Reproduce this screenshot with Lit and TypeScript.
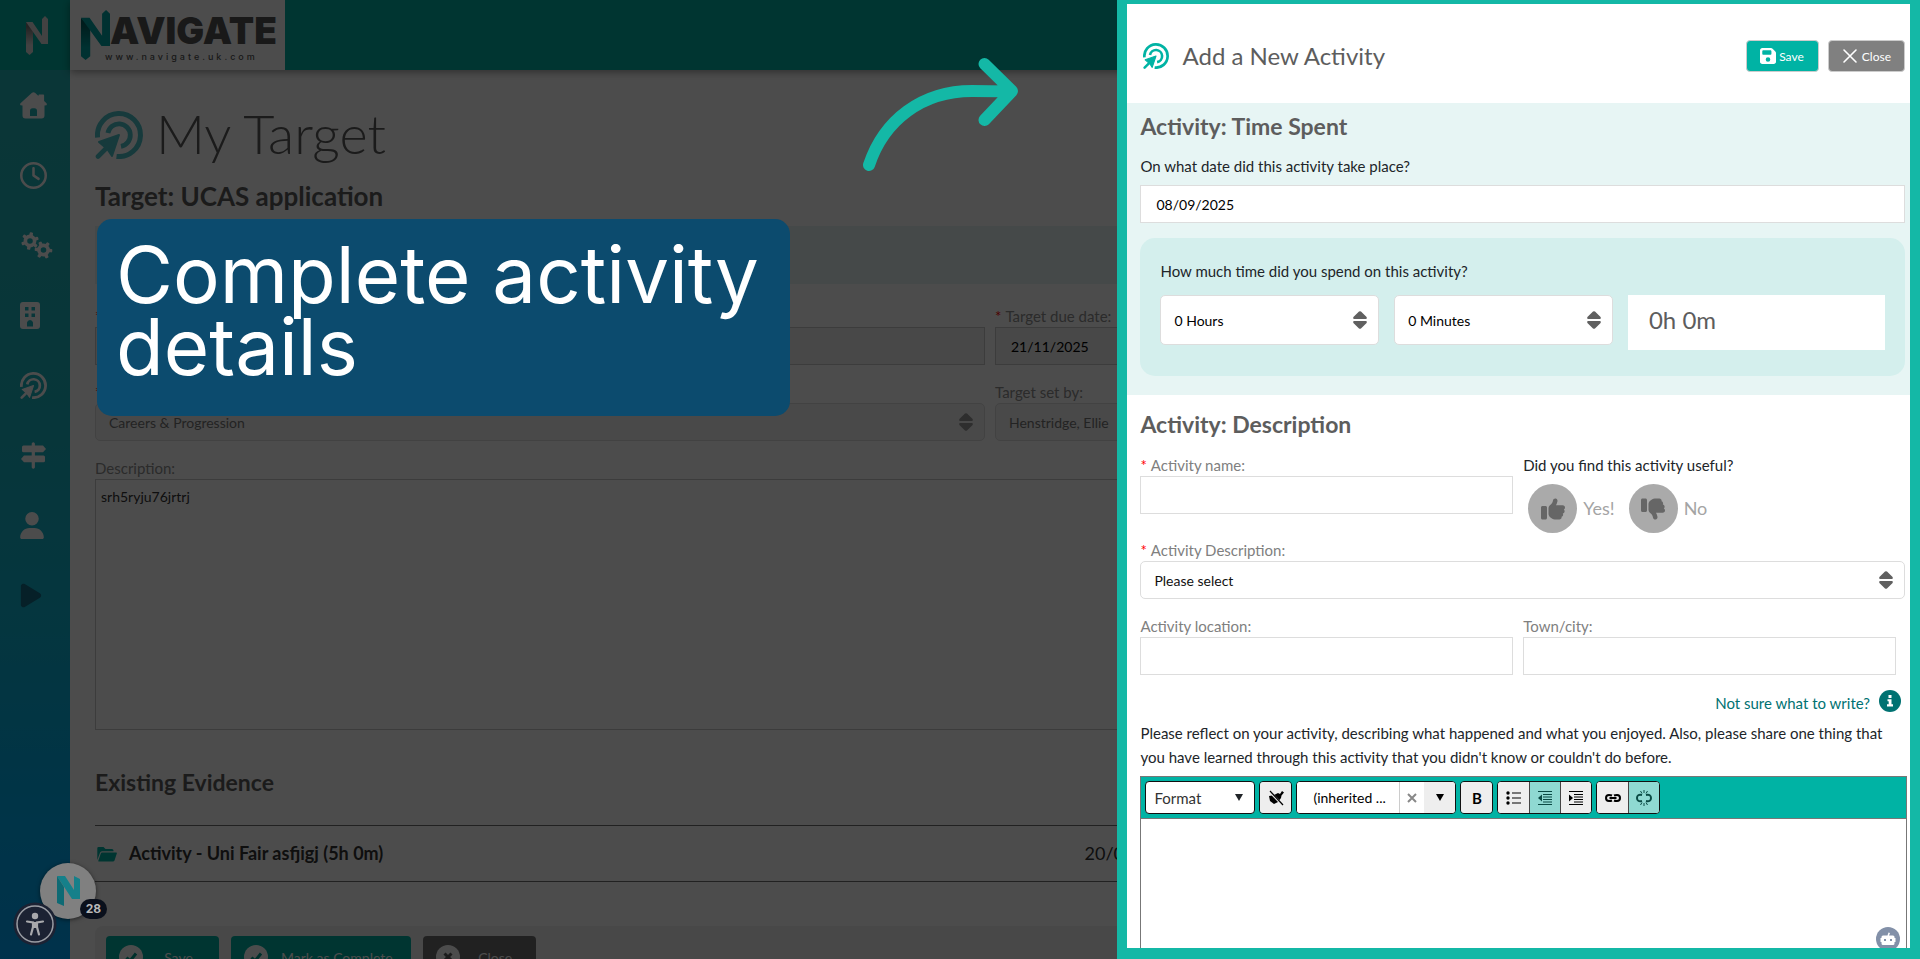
import { LitElement, html, css, svg, nothing } from "lit";
import { customElement, state } from "lit/decorators.js";

const USER = "M224 256A128 128 0 1 0 224 0a128 128 0 1 0 0 256zm-45.7 48C79.8 304 0 383.8 0 482.3C0 498.7 13.3 512 29.7 512H418.3c16.4 0 29.7-13.3 29.7-29.7C448 383.8 368.2 304 269.7 304H178.3z";
const PLAY = "M73 39c-14.8-9.1-33.4-9.4-48.5-.9S0 62.6 0 80V432c0 17.4 9.4 33.4 24.5 41.9s33.7 8.1 48.5-.9L361 297c14.3-8.7 23-24.2 23-41s-8.7-32.2-23-41L73 39z";
const CLOCK = "M464 256A208 208 0 1 1 48 256a208 208 0 1 1 416 0zM0 256a256 256 0 1 0 512 0A256 256 0 1 0 0 256zM232 120V256c0 8 4 15.5 10.7 20l96 64c11 7.4 25.9 4.4 33.3-6.7s4.4-25.9-6.7-33.3L280 243.2V120c0-13.3-10.7-24-24-24s-24 10.7-24 24z";
const THUMB = "M313.4 32.9c26 5.2 42.9 30.5 37.7 56.5l-2.3 11.4c-5.3 26.7-15.1 52.1-28.8 75.2H464c26.5 0 48 21.5 48 48c0 18.5-10.5 34.6-25.9 42.6C497 275.4 504 288.9 504 304c0 23.4-16.8 42.9-38.9 47.1c4.4 7.3 6.9 15.8 6.9 24.9c0 21.3-13.9 39.4-33.1 45.6c.7 3.3 1.1 6.8 1.1 10.4c0 26.5-21.5 48-48 48H294.5c-19 0-37.5-5.6-53.3-16.1l-38.5-25.7C176 420.4 160 390.4 160 358.3V320 272 247.1c0-29.2 13.3-56.7 36-75l7.4-5.9c26.5-21.2 44.6-51 51.2-84.2l2.3-11.4c5.2-26 30.5-42.9 56.5-37.7zM32 192H96c17.7 0 32 14.3 32 32V448c0 17.7-14.3 32-32 32H32c-17.7 0-32-14.3-32-32V224c0-17.7 14.3-32 32-32z";
const FLOPPY = "M64 32C28.7 32 0 60.7 0 96V416c0 35.3 28.7 64 64 64H384c35.3 0 64-28.7 64-64V173.3c0-17-6.7-33.3-18.7-45.3L352 50.7C340 38.7 323.7 32 306.7 32H64zm0 96c0-17.7 14.3-32 32-32H288c17.7 0 32 14.3 32 32v64c0 17.7-14.3 32-32 32H96c-17.7 0-32-14.3-32-32V128zM224 288a64 64 0 1 1 0 128 64 64 0 1 1 0-128z";

const targetIcon = (cls: string) => html`<svg class=${cls} viewBox="0 0 48 48" aria-hidden="true">
  <path d="M2.6 26.5A21.5 21.5 0 1 1 21.5 45.4" fill="none" stroke="currentColor" stroke-width="5" />
  <path d="M12.9 22A11.3 11.3 0 1 1 26 35.3" fill="none" stroke="currentColor" stroke-width="4.8" />
  <path d="M24 24L17 45L12 37.500L11 37L4 31Z" fill="currentColor" stroke="currentColor" stroke-width="2" stroke-linejoin="round" />
  <path d="M3 45.500L15 33.500" stroke="currentColor" stroke-width="4.600" stroke-linecap="round" />
</svg>`;

const teeth = (cx: number, cy: number, turn: number) => svg`
  <circle cx=${cx} cy=${cy} r="4.600" fill="none" stroke="currentColor" stroke-width="3.600" />
  ${[0, 60, 120, 180, 240, 300].map(
    (a) => svg`<rect x=${cx - 1.7} y=${cy - 8.8} width="3.400" height="4" rx="1" fill="currentColor" transform="rotate(${a + turn} ${cx} ${cy})" />`
  )}`;

const nMark = (cls: string, light: string, shade: string, id: string) => html`<svg class=${cls} viewBox="0 0 22 39" preserveAspectRatio="none" aria-hidden="true">
  <defs><linearGradient id=${id} x1="0" y1="0" x2="0" y2="1">
    <stop offset="0.15" stop-color=${shade} /><stop offset="0.7" stop-color=${light} />
  </linearGradient></defs>
  <path d="M0 6L7 13V36L3.500 39L0 36Z" fill="url(#${id})" />
  <path d="M0 6H6.500L16 20V3L19 0L22 3V28H15.500Z" fill=${light} />
</svg>`;

const sorter = html`<svg class="sorter" viewBox="0 0 14 18" aria-hidden="true">
  <path d="M6 .6Q7 -.2 8 .6L13.600 6Q14.200 7.700 13 8H1Q-.2 7.700 .4 6ZM6 17.400Q7 18.200 8 17.400L13.600 12Q14.200 10.300 13 10H1Q-.2 10.300 .4 12Z" fill="currentColor" />
</svg>`;

const menuIcons = [
  { name: "Home", width: 27, box: "0 0 27 27", art: svg`<path fill="currentColor" fill-rule="evenodd" d="M12 .8Q13.500 -.5 15 .8L18.500 4V3.200Q18.500 2.500 19.200 2.500H23.300Q24.100 2.500 24.100 3.300V9L26.500 11.200Q27.200 12.200 26.500 13.200L24.500 13.400V23.500Q24.500 26.500 21.500 26.500H5.500Q2.500 26.500 2.500 23.500V13.600L.5 13.200Q-.3 12.200 .5 11.200ZM10 24V19Q10 16.300 12.500 16.300H14.500Q17 16.300 17 19V24Z" />` },
  { name: "History", width: 27, box: "0 0 512 512", art: svg`<path fill="currentColor" d=${CLOCK} />` },
  { name: "Skills", width: 33, box: "0 0 33 27", art: svg`${teeth(10, 9, 10)}${teeth(23.500, 18, 35)}` },
  { name: "Organisation", width: 20, box: "0 0 20 27", art: svg`<path fill="currentColor" fill-rule="evenodd" d="M3 0H17Q20 0 20 3V24Q20 27 17 27H3Q0 27 0 24V3Q0 0 3 0ZM5 5V8.500H8.500V5ZM11.500 5V8.500H15V5ZM5 11.500V15H8.500V11.500ZM11.500 11.500V15H15V11.500ZM7 24.500H13V20.500Q12.500 18 10 18Q7.500 18 7 20.500Z" />` },
  { name: "Targets", width: 27, box: "", art: nothing },
  { name: "Pathways", width: 27, box: "0 0 27 27", art: svg`<path fill="currentColor" d="M11.700 1.500Q13.300 -1 14.900 1.500V3.500H23L26 7L23 10.200H14.900V13.500H23.500Q25 13.500 25 15V18.800Q25 20.300 23.500 20.300H14.900V25.500Q13.300 28 11.700 25.500V20.300H4L1 17L4 13.500H11.700V10.200H3.500Q2 10.200 2 8.700V5Q2 3.500 3.500 3.500H11.700Z" />` },
  { name: "Profile", width: 24, box: "0 0 448 512", art: svg`<path fill="currentColor" d=${USER} />` },
  { name: "Play", width: 22, box: "0 0 384 512", art: svg`<path fill="currentColor" d=${PLAY} />` },
];

@customElement("app-root")
export class AppRoot extends LitElement {
  @state() private useful = "";

  static styles = css`
    :host { display: block; position: relative; height: 100vh; overflow: hidden; background: #fff; color: #212529; font: 15px/21px Lato, "Open Sans", sans-serif; }
    * { box-sizing: border-box; }
    h1, h2, h3, p, fieldset, legend { margin: 0; padding: 0; border: 0; font-weight: inherit; }
    input, select, textarea, button { font-family: inherit; margin: 0; }
    svg { display: block; flex: none; }
    a { text-decoration: none; color: inherit; }

    .page { display: grid; grid-template-columns: 70px 1fr; grid-template-rows: 70px 1fr; height: 100%; }
    .corner { display: flex; align-items: center; padding-left: 26px; background: #00b3a4; }
    .corner-mark { width: 22px; height: 39px; }
    .topbar { background: #00b3a4; box-shadow: 0 2px 8px #0006; z-index: 1; }
    .brand { width: 215px; height: 70px; background: #fff; display: flex; align-items: flex-start; padding: 10px 0 0 11px; }
    .brand-mark { width: 29px; height: 50px; }
    .brand-text { display: flex; flex-direction: column; align-items: flex-start; }
    .brand-name { font: 900 37px/42px Inter, sans-serif; color: #555; }
    .brand-url { font: 500 9px/9px Inter, sans-serif; letter-spacing: 3px; color: #555; margin-left: -5px; }
    .menu { display: flex; flex-direction: column; padding-left: 20px; background: linear-gradient(#24b4b8 0%, #1ab4c0 35%, #10b4d4 60%, #00aef0 80%, #00a4ff 100%); color: #fff; }
    .menu-link { height: 70px; display: flex; align-items: center; }
    .menu-icon { height: 27px; }
    .menu-link:last-child { color: #146b85; }

    .content { padding: 41px 35px 0 25px; min-width: 0; }
    .title { display: flex; align-items: center; gap: 13px; height: 48px; color: #5d5d5d; }
    .title-icon { width: 48px; height: 48px; color: #4dc3c8; }
    .title-text { font-size: 54px; line-height: 46px; height: 48px; font-weight: 300; white-space: nowrap; }
    .heading { font-size: 23px; line-height: 28px; padding-bottom: 2px; font-weight: 700; color: #5d5d5d; }
    .target-name { margin-top: 23px; font-size: 26px; }
    .band { margin-top: 14px; height: 58px; background: #e7f5f4; }
    .pair { display: grid; grid-template-columns: 1fr 1fr; column-gap: 10px; row-gap: 17px; }
    .target-fields { margin-top: 22px; }
    .field { display: flex; flex-direction: column; min-width: 0; color: #808080; }
    .req { color: #f00; margin-right: 4px; }
    .box { width: 100%; height: 38px; border: 1px solid #ddd; background: #fff; padding: 0 15px; font-size: 14px; color: #000; }
    .box[disabled] { background: #f0f0f0; border-color: #c8c8c8; opacity: 1; }
    .pick { position: relative; display: flex; align-items: center; }
    .pick .box { appearance: none; border-radius: 5px; padding: 0 13px; color: #111; }
    .pick .box[disabled] { color: #777; border-color: #ddd; background: #f4f4f4; }
    .sorter { position: absolute; right: 12px; width: 14px; height: 18px; color: #606060; pointer-events: none; }
    .content .sorter { color: #999; }
    .content .field { color: #909090; }
    .notes-field { margin-top: 17px; }
    .notes { height: 251px; width: 100%; border: 1px solid #c8c8c8; padding: 7px 5px; font-size: 14px; line-height: 20px; resize: none; background: #fff; color: #333; }
    .evidence { margin-top: 38px; }
    .entry { margin-top: 27px; height: 57px; border: solid #707070; border-width: 1px 0; display: grid; grid-template-columns: 55% 1fr; align-items: center; font-size: 18px; color: #333; }
    .entry-name { display: flex; align-items: center; gap: 12px; font-weight: 700; padding-left: 2px; }
    .entry-date { padding-left: 5px; }
    .folder { width: 20px; height: 16px; color: #00b3a4; }
    .actions { margin-top: 44px; padding: 10px 11px; height: 80px; display: flex; gap: 12px; background: #f0f0f0; border-radius: 8px; }
    .action { height: 42px; min-width: 113px; display: flex; align-items: center; gap: 13px; border: 0; border-radius: 4px; padding: 0 18px 0 13px; font-size: 14px; color: #fff; background: #00b3a4; }
    .action.grey { background: #707070; }
    .action-text { flex: 1; text-align: center; }
    .action-icon { width: 24px; height: 24px; }

    .shade { position: absolute; inset: 0; background: rgba(0, 0, 0, 0.7); z-index: 2; }

    .chat { position: absolute; z-index: 3; left: 40px; bottom: 40px; width: 56px; height: 56px; border: 0; border-radius: 50%; background: #808080; display: flex; align-items: center; justify-content: center; padding: 0; box-shadow: 0 1px 4px #0008; }
    .chat-mark { width: 23px; height: 30px; }
    .count { position: absolute; right: -11px; bottom: 0; width: 27px; height: 20px; border-radius: 10px; background: #0a101c; color: #b8b8b8; font: 700 12px/20px Inter, sans-serif; text-align: center; }
    .access { position: absolute; z-index: 4; left: 13px; bottom: 13px; width: 44px; height: 44px; border: 0; padding: 0; background: none; }

    .callout { position: absolute; z-index: 5; left: 97px; top: 219px; width: 693px; padding: 20px 10px 33px 19px; border-radius: 15px; background: #0c4b6e; color: #fff; font: 400 78px/72px Inter, sans-serif; }
    .arrow { position: absolute; z-index: 5; left: 860px; top: 54px; width: 162px; height: 120px; }

    .drawer { position: absolute; z-index: 6; top: 0; right: 0; bottom: 0; width: 41.8%; border: solid #14b8a6; border-width: 4px 10px 11px; background: #fff; overflow: hidden; }
    .drawer-head { height: 99px; padding: 5px 5px 0 16px; display: flex; align-items: center; gap: 13px; }
    .drawer-icon { width: 26px; height: 26px; color: #00b3a4; }
    .drawer-title { flex: 1; font-size: 24px; line-height: 30px; color: #5d5d5d; }
    .cmd { height: 32px; border: 1px solid #ccc; border-radius: 4px; background: #00b3a4; color: #fff; font-size: 12px; display: flex; align-items: center; gap: 3px; padding: 0 14px 0 13px; }
    .cmd.close { background: #808080; margin-left: -4px; gap: 4px; padding: 0 13px; }
    .cmd-icon { width: 16px; height: 18px; }
    .time { background: #e7f5f4; padding: 9px 5px 19px 13px; }
    .date-field { margin-top: 14px; display: flex; flex-direction: column; gap: 8px; }
    .spent { margin-top: 15px; padding: 23px 20px 26px; border-radius: 15px; background: #d4efed; }
    .spent-row { margin-top: 13px; display: grid; grid-template-columns: 1fr 1fr 1.175fr; column-gap: 15px; align-items: start; }
    .spent-row .box { height: 50px; color: #000; }
    .total { height: 55px; background: #fff; padding: 0 21px; font-size: 24px; line-height: 50px; color: #5d5d5d; }
    .about { padding: 15px 5px 0 13px; }
    .about .pair { padding-right: 9px; margin-top: 15px; }
    .useful { color: #212529; }
    .choices { display: flex; gap: 14px; padding: 8px 5px 0; }
    .choice { display: flex; align-items: center; gap: 6px; font-size: 18px; color: #a4a4a4; position: relative; }
    .choice-input { position: absolute; opacity: 0; }
    .disc { width: 49px; height: 49px; border-radius: 50%; background: #aaa; color: #666; display: flex; align-items: center; justify-content: center; }
    .disc.on { background: #00b3a4; color: #fff; }
    .thumb { width: 24px; height: 24px; }
    .kind { margin-top: 7px; }
    .about .place { margin-top: 17px; }
    .hint { margin-top: 15px; display: flex; justify-content: flex-end; gap: 9px; height: 24px; padding-right: 4px; color: #007272; }
    .hint-text { line-height: 26px; }
    .info { width: 22px; height: 22px; }
    .prompt { margin-top: 7px; line-height: 24px; }
    .editor { margin: 7px -2px 0 0; border: 1px solid #777; }
    .tools { display: flex; gap: 4px; padding: 4px; background: #00b3a4; border-bottom: 1px solid #777; }
    .group { display: flex; height: 33px; border: 1px solid #111; border-radius: 4px; overflow: hidden; background: #fff; }
    .tool { width: 31px; border: 0; padding: 0; background: #eee; color: #000; display: flex; align-items: center; justify-content: center; }
    .group .tool + .tool { border-left: 1px solid #444; }
    .tool.off { background: #8fd9d2; color: #0a4a44; }
    .bold { font: 700 15px/20px Lato, sans-serif; }
    .format { width: 108px; border: 0; appearance: none; background: transparent; padding: 0 8px; font-size: 15px; color: #333; }
    .fmt { position: relative; align-items: center; }
    .fmt .caret { position: absolute; right: 11px; pointer-events: none; }
    .caret { width: 8px; height: 7px; }
    .family { width: 103px; border: 0; border-right: 1px solid #ccc; padding: 0 0 0 16px; font-size: 14px; color: #000; }
    .clear { width: 24px; background: #fff; color: #888; }
    .group .clear + .tool { border-left: 0; }
    .glyph { width: 16px; height: 16px; }
    .writing { display: block; width: 100%; height: 200px; border: 0; resize: none; background: #fff; }
    .robot { position: absolute; right: 10px; bottom: -3px; width: 24px; height: 24px; border: 0; padding: 0; background: none; }
  `;

  private choice(value: string, text: string, flip: boolean) {
    return html`<label class="choice">
      <input class="choice-input" type="radio" name="useful" value=${value} @change=${() => (this.useful = value)} />
      <span class="disc ${this.useful === value ? "on" : ""}">
        <svg class="thumb" viewBox="0 0 512 512" aria-hidden="true"><path fill="currentColor" d=${THUMB} transform=${flip ? "matrix(1 0 0 -1 0 512)" : ""} /></svg>
      </span>${text}
    </label>`;
  }

  private lines(dir: "in" | "out") {
    return svg`<path d="M1 1.500H15M6 4.500H15M6 7H15M6 9.500H15M6 12H15M1 14.500H15" stroke="currentColor" stroke-width="1.200" />
      <path fill="currentColor" d=${dir === "in" ? "M1 4.500L5 8L1 11.500Z" : "M5 4.500L1 8L5 11.500Z"} />`;
  }

  render() {
    const caret = html`<svg class="caret" viewBox="0 0 8 7" aria-hidden="true"><path d="M0 0H8L4 7Z" fill="currentColor" /></svg>`;
    const tick = svg`<circle cx="12" cy="12" r="12" fill="#fff" /><path d="M7.500 12.500L11 16L17 8.500" fill="none" stroke="#00a090" stroke-width="3" />`;
    return html`
      <div class="page">
        <div class="corner">${nMark("corner-mark", "#ddd", "#777", "g1")}</div>
        <header class="topbar">
          <div class="brand">
            ${nMark("brand-mark", "#00a3a3", "#006060", "g2")}
            <div class="brand-text"><span class="brand-name">AVIGATE</span><span class="brand-url">www.navigate.uk.com</span></div>
          </div>
        </header>
        <nav class="menu">
          ${menuIcons.map(
            (m) => html`<a class="menu-link" href="#" aria-label=${m.name}>${
              m.box ? html`<svg class="menu-icon" width=${m.width} viewBox=${m.box} aria-hidden="true">${m.art}</svg>` : targetIcon("menu-icon")
            }</a>`
          )}
        </nav>
        <main class="content">
          <div class="title">${targetIcon("title-icon")}<h1 class="title-text">My Target</h1></div>
          <h2 class="heading target-name">Target: UCAS application</h2>
          <div class="band"></div>
          <div class="pair target-fields">
            <div class="field"><label for="t-name"><span class="req">*</span></label><input id="t-name" class="box" disabled /></div>
            <div class="field"><label for="t-due"><span class="req">*</span>Target due date:</label><input id="t-due" class="box" value="21/11/2025" disabled /></div>
            <div class="field"><label for="t-cat"><span class="req">*</span></label>
              <div class="pick"><select id="t-cat" class="box" disabled><option>Careers &amp; Progression</option></select>${sorter}</div></div>
            <div class="field"><label for="t-by">Target set by:</label>
              <div class="pick"><select id="t-by" class="box" disabled><option>Henstridge, Ellie</option></select>${sorter}</div></div>
          </div>
          <div class="field notes-field"><label for="t-notes">Description:</label><textarea id="t-notes" class="notes" .value=${"srh5ryju76jrtrj"}></textarea></div>
          <h2 class="heading evidence">Existing Evidence</h2>
          <div class="entry">
            <div class="entry-name">
              <svg class="folder" viewBox="0 0 20 16" aria-hidden="true"><path fill="currentColor" d="M1.500 1H6.500L8.500 3H15Q16.500 3 16.500 4.500V5.300H5Q3.500 5.300 3 6.800L.3 14V2.200Q.3 1 1.500 1ZM5 6.500H19.200Q20.200 6.500 19.800 7.500L17.500 14.500Q17 15.600 16 15.600H2Q1 15.600 1.400 14.600L3.800 7.500Q4.100 6.500 5 6.500Z" /></svg>
              Activity - Uni Fair asfjigj (5h 0m)
            </div>
            <div class="entry-date">20/08/2025</div>
          </div>
          <div class="actions">
            <button class="action"><svg class="action-icon" viewBox="0 0 24 24" aria-hidden="true">${tick}</svg><span class="action-text">Save</span></button>
            <button class="action"><svg class="action-icon" viewBox="0 0 24 24" aria-hidden="true">${tick}</svg><span class="action-text">Mark as Complete</span></button>
            <button class="action grey"><svg class="action-icon" viewBox="0 0 24 24" aria-hidden="true"><circle cx="12" cy="12" r="12" fill="#fff" /><path d="M8.500 8.500L15.500 15.500M15.500 8.500L8.500 15.500" stroke="#606060" stroke-width="3" /></svg><span class="action-text">Close</span></button>
          </div>
        </main>
      </div>
      <div class="shade"></div>

      <button class="chat" aria-label="Messages">
        <svg class="chat-mark" viewBox="0 0 23 30" aria-hidden="true"><path fill="#15808a" d="M0 0H8L17 14V0L23 3V23H15Z" /><path fill="#0e6a74" d="M0 0L7 11V30L0 27Z" /></svg>
        <span class="count">28</span>
      </button>
      <button class="access" aria-label="Accessibility">
        <svg viewBox="0 0 44 44" aria-hidden="true"><circle cx="22" cy="22" r="21.500" fill="#1c2233" /><circle cx="22" cy="22" r="18" fill="none" stroke="#9a9da4" stroke-width="1.500" />
          <circle cx="22" cy="14" r="3.200" fill="#a8a8ac" /><path d="M14 19.500L20 20.500V25L18 32.500M30 19.500L24 20.500V25L26 32.500" fill="none" stroke="#a8a8ac" stroke-width="2.200" stroke-linecap="round" /><path d="M19.500 20H24.500V26H19.500Z" fill="#a8a8ac" /></svg>
      </button>

      <div class="callout">Complete activity details</div>
      <svg class="arrow" viewBox="0 0 162 120" fill="none" stroke="#14b8a6" stroke-width="12" stroke-linecap="round" stroke-linejoin="round" aria-hidden="true">
        <path d="M9 111C24 66 62 37 112 37Q128 37 150 37.500M124.500 10L152 37L124.500 66" />
      </svg>

      <section class="drawer">
        <div class="drawer-head">
          ${targetIcon("drawer-icon")}
          <h2 class="drawer-title">Add a New Activity</h2>
          <button class="cmd"><svg class="cmd-icon" viewBox="0 20 448 472" aria-hidden="true"><path fill="currentColor" d=${FLOPPY} /></svg>Save</button>
          <button class="cmd close"><svg class="cmd-icon" viewBox="0 0 16 18" aria-hidden="true"><path d="M2 3L14 15M14 3L2 15" stroke="currentColor" stroke-width="1.600" stroke-linecap="round" /></svg>Close</button>
        </div>
        <div class="time">
          <h3 class="heading">Activity: Time Spent</h3>
          <div class="date-field"><label for="a-date">On what date did this activity take place?</label><input id="a-date" class="box" value="08/09/2025" /></div>
          <div class="spent">
            <label for="a-hours">How much time did you spend on this activity?</label>
            <div class="spent-row">
              <div class="pick"><select id="a-hours" class="box"><option>0 Hours</option></select>${sorter}</div>
              <div class="pick"><select class="box" aria-label="Minutes"><option>0 Minutes</option></select>${sorter}</div>
              <output class="total">0h 0m</output>
            </div>
          </div>
        </div>
        <div class="about">
          <h3 class="heading">Activity: Description</h3>
          <div class="pair">
            <div class="field"><label for="a-name"><span class="req">*</span>Activity name:</label><input id="a-name" class="box" /></div>
            <fieldset class="useful"><legend>Did you find this activity useful?</legend>
              <div class="choices">${this.choice("yes", "Yes!", false)}${this.choice("no", "No", true)}</div>
            </fieldset>
          </div>
          <div class="field kind"><label for="a-kind"><span class="req">*</span>Activity Description:</label>
            <div class="pick"><select id="a-kind" class="box"><option>Please select</option></select>${sorter}</div></div>
          <div class="pair place">
            <div class="field"><label for="a-place">Activity location:</label><input id="a-place" class="box" /></div>
            <div class="field"><label for="a-town">Town/city:</label><input id="a-town" class="box" /></div>
          </div>
          <a class="hint" href="#"><span class="hint-text">Not sure what to write?</span>
            <svg class="info" viewBox="0 0 22 22" aria-hidden="true"><circle cx="11" cy="11" r="11" fill="currentColor" /><path d="M9.500 5H12.500V8H9.500ZM8.500 9.200H12.500V14.300H14V16.500H8V14.300H9.700V11.200H8.500Z" fill="#fff" /></svg>
          </a>
          <p class="prompt">Please reflect on your activity, describing what happened and what you enjoyed. Also, please share one thing that you have learned through this activity that you didn't know or couldn't do before.</p>
          <div class="editor">
            <div class="tools">
              <div class="group fmt"><select class="format" aria-label="Format"><option>Format</option></select>${caret}</div>
              <div class="group"><button class="tool" aria-label="Clear formatting"><svg class="glyph" viewBox="0 0 16 16" aria-hidden="true"><path fill="currentColor" d="M1 6L6 5L10 3L12 4L14 1L16 2.500L13.500 5.500L13 8L10 12L6 14L2 11Z" /><path d="M1 1L14.500 15" stroke="#eee" stroke-width="2.500" /><path d="M2 1L15 15" stroke="currentColor" stroke-width="1.200" /></svg></button></div>
              <div class="group"><input class="family" aria-label="Font" value="(inherited ..." /><button class="tool clear" aria-label="Clear font"><svg class="glyph" viewBox="0 0 16 16" aria-hidden="true"><path d="M4 4L12 12M12 4L4 12" stroke="currentColor" stroke-width="2" /></svg></button><button class="tool" aria-label="Open fonts">${caret}</button></div>
              <div class="group"><button class="tool bold">B</button></div>
              <div class="group">
                <button class="tool" aria-label="List"><svg class="glyph" viewBox="0 0 16 16" aria-hidden="true"><path d="M6 3H15M6 8H15M6 13H15" stroke="currentColor" stroke-width="1.200" /><g fill="currentColor"><circle cx="2" cy="3" r="1.700" /><circle cx="2" cy="8" r="1.700" /><circle cx="2" cy="13" r="1.700" /></g></svg></button>
                <button class="tool off" aria-label="Outdent"><svg class="glyph" viewBox="0 0 16 16" aria-hidden="true">${this.lines("out")}</svg></button>
                <button class="tool" aria-label="Indent"><svg class="glyph" viewBox="0 0 16 16" aria-hidden="true">${this.lines("in")}</svg></button>
              </div>
              <div class="group">
                <button class="tool" aria-label="Link"><svg class="glyph" viewBox="0 0 16 16" aria-hidden="true"><path d="M7 10.500Q6 11 4 11Q1 11 1 8Q1 5 4 5Q6 5 7 5.500M9 5.500Q10 5 12 5Q15 5 15 8Q15 11 12 11Q10 11 9 10.500M4.500 8H11.500" fill="none" stroke="currentColor" stroke-width="2" /></svg></button>
                <button class="tool off" aria-label="Unlink"><svg class="glyph" viewBox="0 0 16 16" aria-hidden="true"><path d="M6 11Q1 12 1 8Q1 4 6 5M10 5Q15 4 15 8Q15 12 10 11" fill="none" stroke="currentColor" stroke-width="2" /><path d="M8 0V3M8 13V16M4.500 1L6 3.500M11.500 1L10 3.500M4.500 15L6 12.500M11.500 15L10 12.500" stroke="currentColor" /></svg></button>
              </div>
            </div>
            <textarea class="writing" aria-label="Reflection"></textarea>
          </div>
        </div>
        <button class="robot" aria-label="Assistant"><svg viewBox="0 0 24 24" aria-hidden="true"><circle cx="12" cy="12" r="12" fill="#8290a8" /><path fill="#fff" fill-rule="evenodd" d="M11.500 8.500L12.500 5.500L14 6L13 8.500H17Q18.500 8.500 18.500 10V11H19.500V15H18.500V16.500Q18.500 18 17 18H7Q5.500 18 5.500 16.500V15H4.500V11H5.500V10Q5.500 8.500 7 8.500ZM8 12V14H10V12ZM14 12V14H16V12Z" /></svg></button>
      </section>
    `;
  }
}
